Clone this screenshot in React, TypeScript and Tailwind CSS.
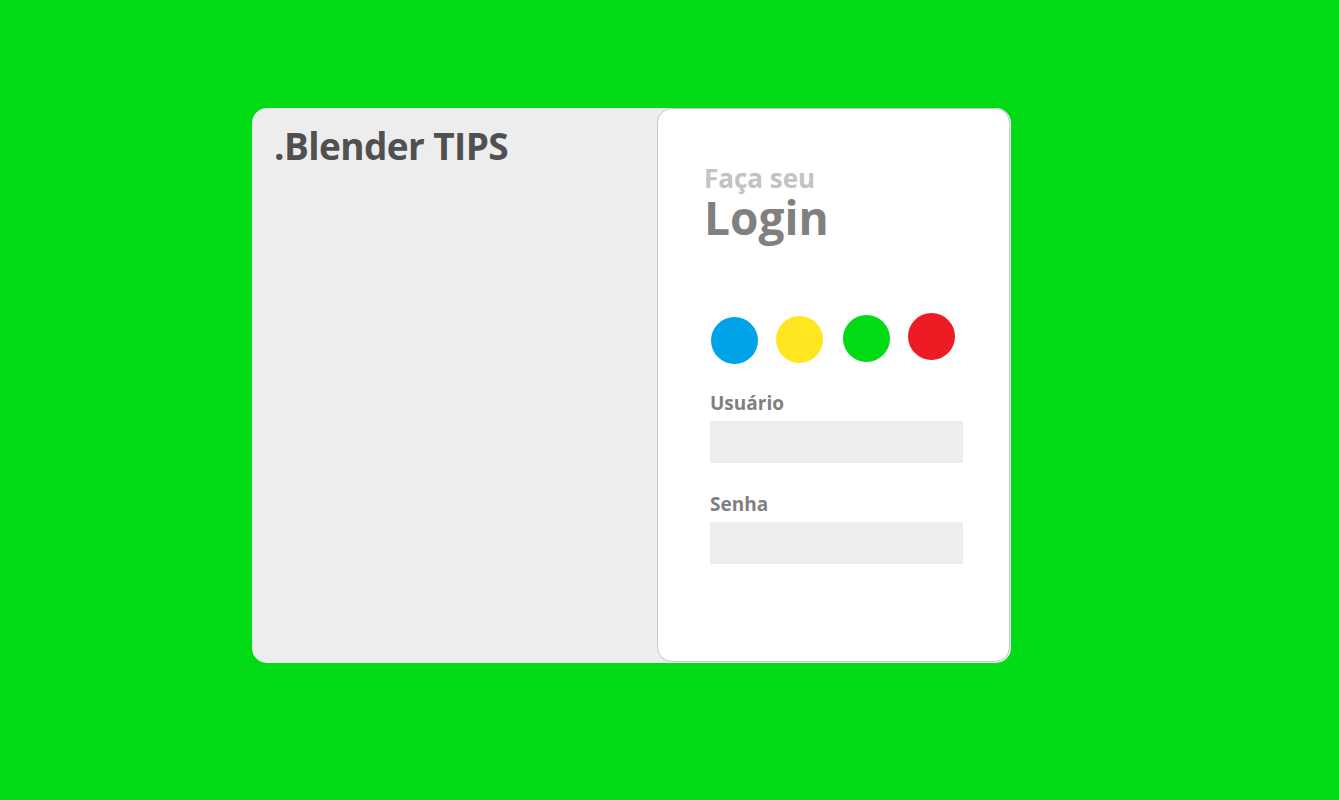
export default function App() {
  const dots = [
    { c: "bg-[#00a2e8]", m: "mt-[4px]" },
    { c: "bg-[#ffe620]", m: "mt-[3px]" },
    { c: "bg-[#00db15]", m: "mt-[2px]" },
    { c: "bg-[#ed1c24]", m: "mt-0" },
  ];

  return (
    <div className="min-h-screen w-full bg-[#00db15] pt-[108px] pl-[252px] font-['Open_Sans',sans-serif]">
      <div className="flex w-[759px] h-[555px] rounded-[15px] bg-[#ededed] overflow-hidden">
        <div className="w-[405px] pl-[22px] pt-[19px]">
          <h1 className="text-[37px] font-bold leading-none tracking-[-0.6px] text-[#505050]">.Blender TIPS</h1>
        </div>
        <div className="w-[353px] h-[554px] rounded-[15px] border border-[#c8c8c8] bg-white pl-[46px] pr-[47px] pt-[56px]">
          <p className="text-[26px] font-bold leading-none text-[#c3c3c3]">Faça seu</p>
          <p className="mt-[4px] text-[46px] font-bold leading-[44px] text-[#808080]">Login</p>
          <div className="mt-[74px] flex items-start gap-[18px] pl-[7px]">
            {dots.map((d, i) => (
              <span key={i} className={`block h-[47px] w-[47px] rounded-full ${d.c} ${d.m} ${i === 2 ? "ml-[2px]" : ""}`} />
            ))}
          </div>
          <div className="mt-[30px] pl-[6px]">
            <label className="block text-[19px] font-bold leading-none text-[#808080]">Usuário</label>
            <div className="mt-[8px] h-[42px] w-[253px] bg-[#ededed]" />
            <label className="mt-[32px] block text-[19px] font-bold leading-none text-[#808080]">Senha</label>
            <div className="mt-[8px] h-[42px] w-[253px] bg-[#ededed]" />
          </div>
        </div>
      </div>
    </div>
  );
}
